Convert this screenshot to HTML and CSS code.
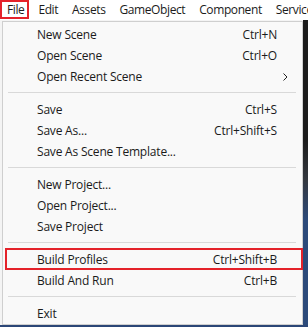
FILE: index.html
```html
<!DOCTYPE html>
<html>
<head>
<meta charset="utf-8">
<link rel="stylesheet" href="styles.css">
</head>
<body>
<div class="menubar">
  <span class="mb-item mb-active">File</span>
  <span class="mb-item">Edit</span>
  <span class="mb-item">Assets</span>
  <span class="mb-item">GameObject</span>
  <span class="mb-item">Component</span>
  <span class="mb-item">Services</span>
</div>
<div class="stage">
  <div class="menu">
    <div class="row"><span>New Scene</span><span class="sc">Ctrl+N</span></div>
    <div class="row"><span>Open Scene</span><span class="sc">Ctrl+O</span></div>
    <div class="row row-sub"><span>Open Recent Scene</span>
      <svg class="chev" width="5" height="8" viewBox="0 0 5 8"><path d="M0.5 0.5 L4 4 L0.5 7.5" fill="none" stroke="#222" stroke-width="1"/></svg>
    </div>
    <div class="sep"></div>
    <div class="row"><span>Save</span><span class="sc">Ctrl+S</span></div>
    <div class="row"><span>Save As...</span><span class="sc">Ctrl+Shift+S</span></div>
    <div class="row"><span>Save As Scene Template...</span></div>
    <div class="sep"></div>
    <div class="row"><span>New Project...</span></div>
    <div class="row"><span>Open Project...</span></div>
    <div class="row"><span>Save Project</span></div>
    <div class="sep"></div>
    <div class="row row-mark"><span>Build Profiles</span><span class="sc">Ctrl+Shift+B</span></div>
    <div class="row"><span>Build And Run</span><span class="sc">Ctrl+B</span></div>
    <div class="sep"></div>
    <div class="row"><span>Exit</span></div>
  </div>
  <div class="right-strip"></div>
</div>
<div class="bottom-strip"></div>
</body>
</html>
```
FILE: styles.css
```css
html, body {
  margin: 0;
  padding: 0;
  background: #ffffff;
  overflow: hidden;
}
body {
  width: 308px;
  height: 327px;
  font-family: "Open Sans", "Noto Sans", sans-serif;
  font-size: 12px;
  color: #1b1b1b;
  letter-spacing: -0.2px;
}
.menubar {
  display: flex;
  height: 20px;
  line-height: 20px;
  background: #ffffff;
  white-space: nowrap;
  overflow: hidden;
  letter-spacing: -0.4px;
}
.mb-item {
  padding: 0 7px;
  position: relative;
  flex: none;
}
.mb-active::after {
  content: "";
  position: absolute;
  left: 0;
  top: 0;
  right: 2px;
  bottom: 1px;
  border: 2px solid #e4222a;
}
.stage {
  display: flex;
  height: 305px;
  background: #f4f4f4;
}
.menu {
  box-sizing: border-box;
  margin-left: 2px;
  margin-top: 1px;
  width: 301px;
  height: 304px;
  border: 1px solid #cfcfcf;
  background: #f9f9f9;
  padding-top: 2px;
}
.row {
  position: relative;
  display: flex;
  justify-content: space-between;
  align-items: center;
  height: 21px;
  padding: 0 25px 0 34px;
  white-space: nowrap;
}
.row-sub {
  padding-right: 14px;
}
.chev {
  display: block;
  margin-top: 1px;
}
.row-mark::after {
  content: "";
  position: absolute;
  left: 2px;
  right: -1px;
  top: -1px;
  bottom: 0;
  border: 2px solid #e4222a;
}
.sep {
  height: 1px;
  margin: 5px 6px 6px 5px;
  background: #d9d9d9;
}
.right-strip {
  flex: 1;
  background: linear-gradient(#1c1c1c 0, #1c1c1c 120px, #34383f 160px, #2c4a7a 200px, #2c4a7a 100%);
}
.bottom-strip {
  height: 2px;
  background: #2b4677;
}
```
